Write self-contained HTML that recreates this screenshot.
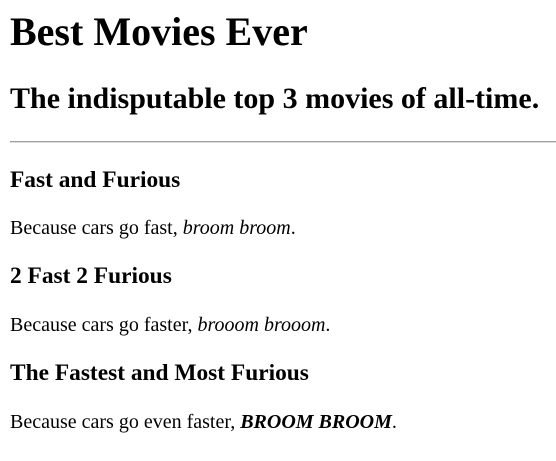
<!DOCTYPE html>
<html><head><style>
html,body{margin:0;padding:0;background:#fff;}
body{padding:0 0 0 10px;width:600px;font-family:"Liberation Serif",serif;color:#000;overflow:hidden;}
h1{font-size:40px;margin:0 0 26.8px;padding-top:9px;line-height:46px;font-weight:bold;}
h2{font-size:30px;margin:26.8px 0 24.9px;line-height:34.5px;}
hr{margin:0;border:0;border-top:1.5px solid #a0a0a0;border-bottom:0.5px solid #ddd;height:0;}
h3{font-size:23.4px;margin:23.4px 0;line-height:27px;}
p{font-size:20px;margin:20px 0;line-height:23px;}
</style></head><body>
<h1>Best Movies Ever</h1>
<h2>The indisputable top 3 movies of all-time.</h2>
<hr>
<h3>Fast and Furious</h3>
<p>Because cars go fast, <em>broom broom</em>.</p>
<h3>2 Fast 2 Furious</h3>
<p>Because cars go faster, <em>brooom brooom</em>.</p>
<h3>The Fastest and Most Furious</h3>
<p>Because cars go even faster, <em><strong>BROOM BROOM</strong></em>.</p>
</body></html>
